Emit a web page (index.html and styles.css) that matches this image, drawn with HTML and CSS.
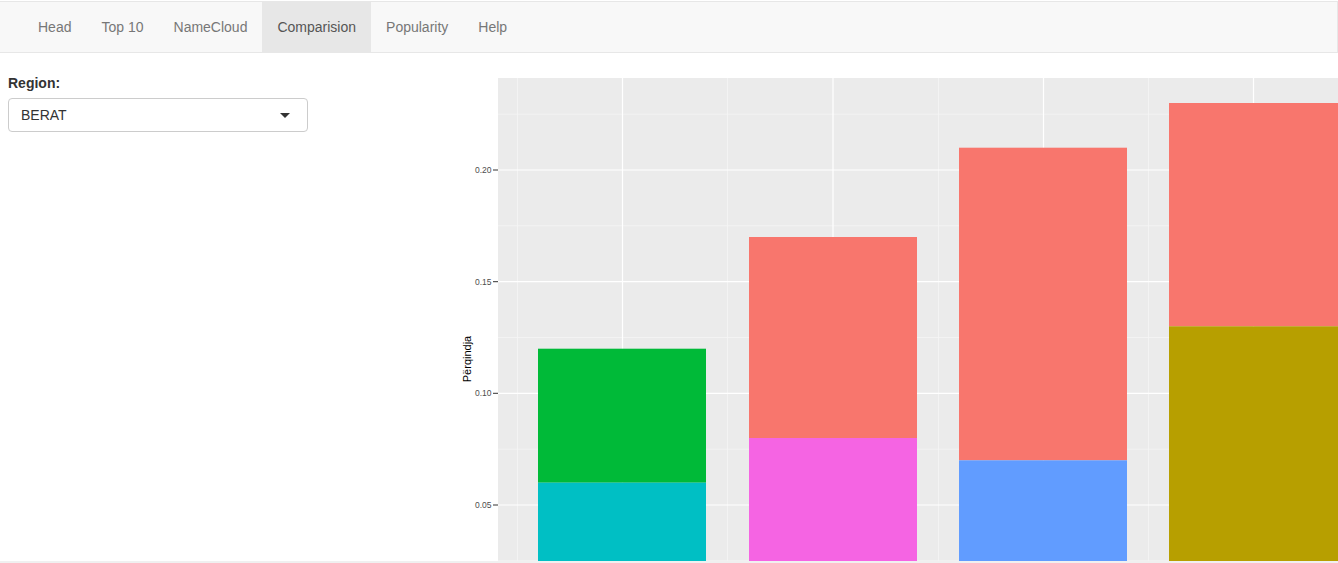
FILE: index.html
```html
<!DOCTYPE html>
<html>
<head>
<meta charset="utf-8">
<link rel="stylesheet" href="styles.css">
</head>
<body>
<nav class="navbar">
  <ul class="nav">
    <li><a>Head</a></li>
    <li><a>Top 10</a></li>
    <li><a>NameCloud</a></li>
    <li class="active"><a>Comparision</a></li>
    <li><a>Popularity</a></li>
    <li><a>Help</a></li>
  </ul>
</nav>
<div class="content">
  <aside class="sidebar">
    <label class="label">Region:</label>
    <div class="select"><span>BERAT</span><span class="caret"></span></div>
  </aside>
  <main class="main">
    <svg class="plot" width="898" height="508" viewBox="0 0 898 508" xmlns="http://www.w3.org/2000/svg">
      <rect x="58" y="25" width="900" height="600" fill="#ebebeb"/>
      <g stroke="#f5f5f5" stroke-width="0.8">
        <line x1="58" x2="898" y1="61.2" y2="61.2"/>
        <line x1="58" x2="898" y1="172.8" y2="172.8"/>
        <line x1="58" x2="898" y1="284.5" y2="284.5"/>
        <line x1="58" x2="898" y1="396.2" y2="396.2"/>
        <line x1="58" x2="898" y1="507.8" y2="507.8"/>
        <line x1="77.5" x2="77.5" y1="25" y2="508"/>
        <line x1="287.5" x2="287.5" y1="25" y2="508"/>
        <line x1="498.5" x2="498.5" y1="25" y2="508"/>
        <line x1="708.5" x2="708.5" y1="25" y2="508"/>
      </g>
      <g stroke="#ffffff" stroke-width="1.2">
        <line x1="58" x2="898" y1="117" y2="117"/>
        <line x1="58" x2="898" y1="228.7" y2="228.7"/>
        <line x1="58" x2="898" y1="340.3" y2="340.3"/>
        <line x1="58" x2="898" y1="452" y2="452"/>
        <line x1="182.5" x2="182.5" y1="25" y2="508"/>
        <line x1="393" x2="393" y1="25" y2="508"/>
        <line x1="603.5" x2="603.5" y1="25" y2="508"/>
        <line x1="813.5" x2="813.5" y1="25" y2="508"/>
      </g>
      <rect x="98" y="295.7" width="168" height="134" fill="#00BA38"/>
      <rect x="98" y="429.7" width="168" height="100" fill="#00BFC4"/>
      <rect x="309" y="184" width="168" height="201" fill="#F8766D"/>
      <rect x="309" y="385" width="168" height="140" fill="#F564E3"/>
      <rect x="519" y="94.7" width="168" height="312.6" fill="#F8766D"/>
      <rect x="519" y="407.3" width="168" height="120" fill="#619CFF"/>
      <rect x="729" y="50" width="180" height="223.3" fill="#F8766D"/>
      <rect x="729" y="273.3" width="180" height="260" fill="#B79F00"/>
      <g stroke="#333333" stroke-width="1">
        <line x1="53" x2="58" y1="117" y2="117"/>
        <line x1="53" x2="58" y1="228.7" y2="228.7"/>
        <line x1="53" x2="58" y1="340.3" y2="340.3"/>
        <line x1="53" x2="58" y1="452" y2="452"/>
      </g>
      <g class="tick" text-anchor="end">
        <text x="51.5" y="120">0.20</text>
        <text x="51.5" y="231.7">0.15</text>
        <text x="51.5" y="343.3">0.10</text>
        <text x="51.5" y="455">0.05</text>
      </g>
      <text class="ytitle" transform="translate(30.5 306) rotate(-90)" text-anchor="middle">Përqindja</text>
    </svg>
  </main>
</div>
<div class="bottom"></div>
</body>
</html>
```

FILE: styles.css
```css
html, body {
  margin: 0;
  padding: 0;
  overflow: hidden;
  background: #ffffff;
}
body {
  font-family: "Liberation Sans", Arial, sans-serif;
  font-size: 14px;
  color: #333333;
  width: 1338px;
  height: 563px;
}
.navbar {
  margin-top: 1px;
  height: 50px;
  background: #f8f8f8;
  border: 1px solid #e7e7e7;
  border-left: none;
  box-sizing: content-box;
  width: 1337px;
}
.nav {
  list-style: none;
  margin: 0;
  padding: 0 0 0 23px;
  display: flex;
  height: 50px;
}
.nav li a {
  display: block;
  padding: 0 15px;
  line-height: 50px;
  color: #777777;
}
.nav li.active a {
  background: #e7e7e7;
  color: #555555;
}
.content {
  display: flex;
  height: 508px;
  overflow: hidden;
}
.sidebar {
  width: 432px;
  padding: 20px 0 0 8px;
  flex: none;
}
.label {
  display: block;
  font-weight: bold;
  line-height: 20px;
  margin-bottom: 5px;
  color: #333333;
}
.select {
  width: 300px;
  height: 34px;
  box-sizing: border-box;
  border: 1px solid #cccccc;
  border-radius: 4px;
  display: flex;
  align-items: center;
  justify-content: space-between;
  padding: 0 17px 0 12px;
  color: #333333;
}
.caret {
  width: 0;
  height: 0;
  border-left: 5px solid transparent;
  border-right: 5px solid transparent;
  border-top: 5px solid #333333;
  margin-top: 1px;
}
.main {
  flex: none;
  width: 898px;
}
.plot {
  display: block;
}
.tick {
  font-family: "Liberation Sans", Arial, sans-serif;
  font-size: 8.5px;
  fill: #4d4d4d;
}
.ytitle {
  font-family: "Liberation Sans", Arial, sans-serif;
  font-size: 11px;
  fill: #000000;
}
.bottom {
  height: 2px;
  background: #f0f0f0;
}
```
